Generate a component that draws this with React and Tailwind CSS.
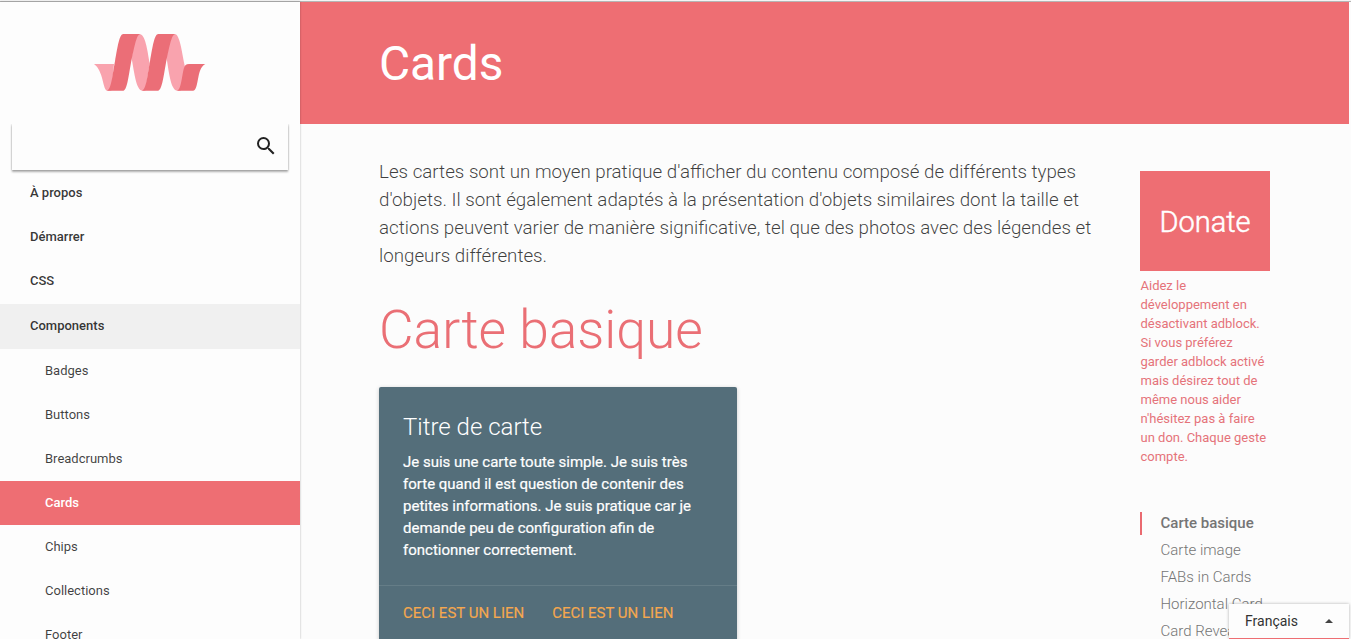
const topLinks = ["À propos", "Démarrer", "CSS"];
const components = ["Badges", "Buttons", "Breadcrumbs", "Cards", "Chips", "Collections", "Footer"];
const toc = ["Carte image", "FABs in Cards", "Horizontal Card", "Card Reveal"];
const intro = [
  "Les cartes sont un moyen pratique d'afficher du contenu composé de différents types",
  "d'objets. Il sont également adaptés à la présentation d'objets similaires dont la taille et",
  "actions peuvent varier de manière significative, tel que des photos avec des légendes et",
  "longeurs différentes.",
];
const cardText = [
  "Je suis une carte toute simple. Je suis très",
  "forte quand il est question de contenir des",
  "petites informations. Je suis pratique car je",
  "demande peu de configuration afin de",
  "fonctionner correctement.",
];
const donateText = [
  "Aidez le",
  "développement en",
  "désactivant adblock.",
  "Si vous préférez",
  "garder adblock activé",
  "mais désirez tout de",
  "même nous aider",
  "n'hésitez pas à faire",
  "un don. Chaque geste",
  "compte.",
];

function Logo() {
  return (
    <svg viewBox="0 0 420 240" className="h-20 w-[140px]" aria-hidden="true">
      <path fill="#f9a3ae" d="M42 132H102L94 212H82C68 212 71 152 42 132Z" />
      <path fill="#f9a3ae" d="M178 42C196 42 202 90 209 130L196 212H188C168 212 163 156 155 116C160 80 165 42 178 42Z" />
      <path fill="#f9a3ae" d="M284 42C300 42 306 100 315 140L302 212H293C272 212 267 156 260 116C264 80 269 42 284 42Z" />
      <path fill="#eb6e77" d="M130 42H181C169 42 162 88 155 118C146 163 142 212 130 212H80C94 212 98 160 105 124C113 80 118 42 130 42Z" />
      <path fill="#eb6e77" d="M235 42H286C274 42 267 88 260 118C251 163 247 212 234 212H185C199 212 203 160 210 124C218 80 223 42 235 42Z" />
      <path fill="#eb6e77" d="M290 212C304 212 305 168 312 144C314 137 318 132 327 132H376C348 145 358 212 339 212Z" />
    </svg>
  );
}

function Sidebar() {
  return (
    <nav className="z-10 flex w-[300px] shrink-0 flex-col bg-[#fdfdfd] text-[13px] text-black/80 shadow-[0_0_2px_rgba(0,0,0,0.3)]">
      <div className="flex h-[122px] shrink-0 justify-center pt-[18px]">
        <Logo />
      </div>
      <div className="h-[53px] shrink-0 overflow-hidden px-3">
        <div className="flex h-[46px] items-center justify-end pr-[10px] shadow-[0_2px_2px_rgba(0,0,0,0.3),0_0_2px_rgba(0,0,0,0.25)]">
          <svg viewBox="0 0 24 24" className="mt-[-3px] size-[24px]" fill="#222" aria-hidden="true">
            <path d="M15.5 14h-.79l-.28-.27A6.47 6.47 0 0 0 16 9.5 6.5 6.5 0 1 0 9.5 16c1.61 0 3.09-.59 4.23-1.57l.27.28v.79l5 4.99L20.49 19l-4.99-5zm-6 0a4.5 4.5 0 1 1 0-9 4.5 4.5 0 0 1 0 9z" />
          </svg>
        </div>
      </div>
      <ul className="mt-[-6px]">
        {topLinks.map((t) => (
          <li key={t} className="flex h-11 items-center pl-[30px] font-medium">{t}</li>
        ))}
        <li className="mt-px flex h-[45px] items-center bg-[#f0f0f0] pb-px pl-[30px] font-medium">Components</li>
        {components.map((t) => (
          <li key={t} className={t === "Cards" ? "flex h-11 items-center bg-[#ee6e73] pl-[45px] font-medium text-white" : "flex h-11 items-center pl-[45px] text-black/75"}>{t}</li>
        ))}
      </ul>
    </nav>
  );
}

function BasicCard() {
  return (
    <section className="mt-[26px] h-[300px] w-[358px] rounded-[2px] bg-[#546e7a] text-white shadow-[0_1px_4px_rgba(0,0,0,0.2)]">
      <div className="h-[198px] px-6 pt-6">
        <h3 className="text-[24px] leading-8 font-light">Titre de carte</h3>
        <p className="mt-2 text-[15px] leading-[22px] whitespace-nowrap [-webkit-text-stroke:0.2px_white]">
          {cardText.map((l) => <span key={l} className="block">{l}</span>)}
        </p>
      </div>
      <div className="flex gap-7 border-t border-[#657d87] px-6 pt-4 text-[15px] leading-[22px] text-[#f5a84e] [-webkit-text-stroke:0.15px_#f5a84e]">
        <a>CECI EST UN LIEN</a>
        <a>CECI EST UN LIEN</a>
      </div>
    </section>
  );
}

function Aside() {
  return (
    <aside className="w-[130px] shrink-0 pt-[47px]">
      <div className="flex h-[100px] items-center justify-center bg-[#ee6e73] pt-[3px] text-[29px] font-light text-white [-webkit-text-stroke:0.5px_white]">Donate</div>
      <p className="mt-[5px] pl-[0.5px] text-[13px] leading-[19px] whitespace-nowrap text-[#e5737a]">
        {donateText.map((l) => <span key={l} className="block">{l}</span>)}
      </p>
      <ul className="mt-[46px] text-[15px] whitespace-nowrap text-[#757575]">
        <li className="flex h-[23px] items-center border-l-2 border-[#ea6a70] pl-[18.5px] font-medium">Carte basique</li>
        <li className="h-[2px]" />
        {toc.map((t) => (
          <li key={t} className="flex h-[27px] items-center pl-[20.5px] font-light">{t}</li>
        ))}
      </ul>
    </aside>
  );
}

export default function App() {
  return (
    <div className="relative flex h-[639px] w-[1351px] flex-col overflow-hidden bg-[#fcfcfc] font-['Roboto',sans-serif]">
      <div className="h-[2px] shrink-0 border-b border-[#b5b5b5] bg-[#f4f4f4]" />
      <div className="flex min-h-0 flex-1">
        <Sidebar />
        <div className="mr-[2px] flex min-w-0 flex-1 flex-col">
          <header className="flex h-[122px] shrink-0 items-center bg-[#ee6e73] pt-[4px] pl-[79px]">
            <h1 className="text-[47.8px] leading-none text-white">Cards</h1>
          </header>
          <div className="flex min-h-0 flex-1 pl-[79px]">
            <main className="w-[761px] shrink-0 pt-[34px]">
              <p className="text-[18.74px] leading-7 font-light whitespace-nowrap text-black/75">
                {intro.map((l) => <span key={l} className="block">{l}</span>)}
              </p>
              <h2 className="mt-[28px] pt-[2px] text-[53.3px] leading-[61px] font-light text-[#ea6f75]">Carte basique</h2>
              <BasicCard />
            </main>
            <Aside />
          </div>
        </div>
      </div>
      <div className="absolute right-[2px] bottom-0 z-20 flex h-[35px] w-[120px] items-center justify-between border-b border-[#ee6e73] bg-[#fdfdfd] pr-[16px] pl-4 text-[14px] text-[#333] shadow-[0_0_3px_rgba(0,0,0,0.3)]">
        <span>Français</span>
        <svg viewBox="0 0 8 4" className="h-1 w-2" fill="#444" aria-hidden="true"><path d="M0 4L4 0L8 4Z" /></svg>
      </div>
    </div>
  );
}
